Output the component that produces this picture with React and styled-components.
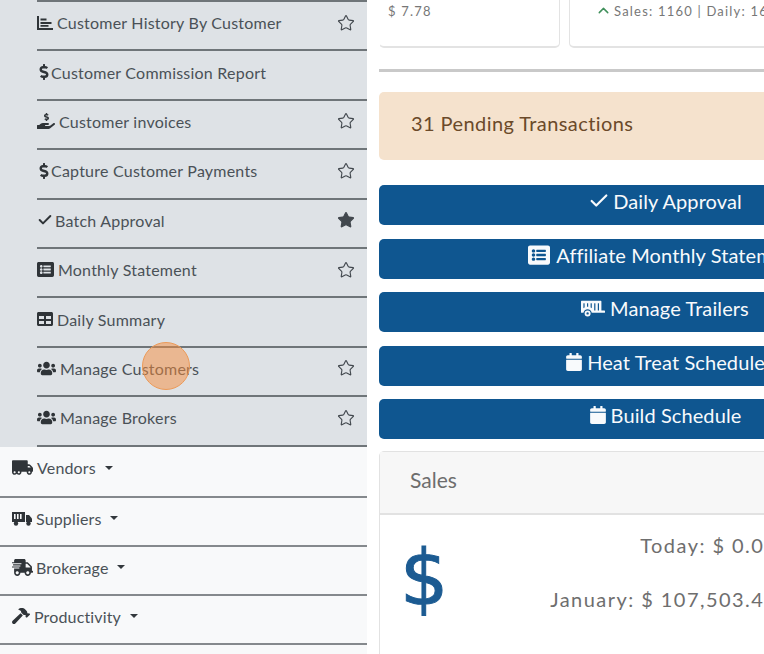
import React from "react";
import styled, { createGlobalStyle } from "styled-components";
import {
  FaDollarSign, FaHandHoldingUsd, FaListAlt, FaTable, FaUsers,
  FaTruckMoving, FaTrailer, FaShippingFast, FaHammer, FaCalendar,
} from "react-icons/fa";
import { Check, ChevronUp, Star } from "lucide-react";

const Global = createGlobalStyle`
  html, body { margin: 0; padding: 0; background: #fff; }
  body { font-family: "Lato", "Open Sans", sans-serif; }
`;

const Page = styled.div`
  position: relative;
  display: flex;
  width: 764px;
  height: 654px;
  overflow: hidden;
`;

const Sidebar = styled.aside`
  flex: 0 0 367px;
  background: #f8f9fa;
`;

const SubMenu = styled.ul`
  list-style: none;
  margin: 0;
  padding: 0 0 0 37px;
  background: #dee2e6;
`;

const SubRow = styled.li`
  display: flex;
  align-items: center;
  box-sizing: content-box;
  height: 41.4px;
  padding-bottom: 6px;
  border-top: 2px solid #6f7579;
  color: #4a5157;
  font-size: 16px;
  letter-spacing: 0.22px;
  &:last-child { border-bottom: 2px solid #6f7579; }
`;

const RowLabel = styled.span`
  display: flex;
  align-items: center;
  gap: ${(p) => p.$gap ?? 5}px;
  flex: 1;
  svg { color: #2f3438; flex: none; }
`;

const IconBox = styled.span`
  display: flex;
  justify-content: center;
  width: ${(p) => p.$w}px;
`;

const StarSlot = styled.span`
  display: flex;
  width: 18px;
  margin-right: 12px;
  color: #42484e;
`;

const TopRow = styled.div`
  display: flex;
  align-items: center;
  gap: ${(p) => p.$gap ?? 5}px;
  height: 41px;
  padding: 0 0 6px 12px;
  border-top: 2px solid #85898d;
  color: #4a5157;
  font-size: 16px;
  letter-spacing: 0.15px;
  svg { color: #2f3438; flex: none; }
  &:first-of-type { border-top: 0; height: 42px; padding-bottom: 7px; }
`;

const Caret = styled.span`
  width: 0;
  height: 0;
  margin-left: 5px;
  border-left: 4.5px solid transparent;
  border-right: 4.5px solid transparent;
  border-top: 4.5px solid #33383d;
`;

const Main = styled.main`
  flex: 0 0 572px;
  margin-left: 12px;
`;

const CardRow = styled.div`
  display: flex;
  gap: 9px;
  margin-top: -20px;
`;

const StatCard = styled.div`
  flex: ${(p) => (p.$first ? "0 0 181px" : "1")};
  height: 68px;
  box-sizing: border-box;
  padding: ${(p) => (p.$first ? "22px 0 0 8px" : "22px 0 0 25px")};
  border: 1px solid #e3e3e3;
  border-left-color: ${(p) => (p.$first ? "transparent" : "#e3e3e3")};
  border-bottom-width: 2px;
  border-radius: 5px;
  color: #777;
  font-size: 13px;
  letter-spacing: 1.2px;
  display: flex;
  gap: 2px;
  white-space: nowrap;
  svg { color: #3f8f5a; margin-top: -1px; }
`;

const Divider = styled.hr`
  margin: 21px 0 0;
  border: 0;
  height: 3px;
  background: #c9c9c9;
`;

const Alert = styled.div`
  margin-top: 20px;
  height: 68px;
  box-sizing: border-box;
  display: flex;
  align-items: center;
  padding: 0 0 6px 32px;
  background: #f5e2cd;
  border-radius: 5px;
  color: #6b4a2a;
  font-size: 20px;
  letter-spacing: 0.42px;
`;

const ActionList = styled.div`
  display: flex;
  flex-direction: column;
  gap: 13.5px;
  margin-top: 25px;
`;

const ActionButton = styled.button`
  display: flex;
  align-items: center;
  justify-content: center;
  gap: ${(p) => p.$gap ?? 6}px;
  height: 40px;
  padding: 0 0 8px;
  border: 0;
  border-radius: 5px;
  background: #0f5690;
  color: #f8fafc;
  font-family: inherit;
  font-size: 20px;
  letter-spacing: 0.1px;
`;

const SalesCard = styled.section`
  margin-top: 12px;
  border: 1px solid #e2e2e2;
  border-radius: 5px;
  height: 300px;
  box-sizing: border-box;
`;

const SalesHeader = styled.header`
  height: 55px;
  display: flex;
  align-items: center;
  padding: 0 0 6px 30px;
  background: #f7f7f7;
  border-bottom: 2px solid #e2e2e2;
  color: #6d6d6d;
  font-size: 21px;
`;

const SalesBody = styled.div`
  display: flex;
  padding-left: 20px;
`;

const Dollar = styled.span`
  margin-top: 15px;
  color: #1c5b92;
  font-family: "DejaVu Sans", sans-serif;
  font-size: 76px;
  line-height: 96px;
  -webkit-text-stroke: 1px #1c5b92;
`;

const SalesStats = styled.div`
  flex: none;
  width: 329px;
  margin-top: 3px;
  text-align: right;
  color: #6e6e6e;
  font-size: 20px;
  letter-spacing: 1.45px;
  line-height: 54px;
  white-space: nowrap;
`;

const Tap = styled.div`
  position: absolute;
  left: 142px;
  top: 342px;
  width: 46px;
  height: 46px;
  border: 1px solid #ec9a58;
  border-radius: 50%;
  background: rgba(245, 140, 60, 0.5);
`;

const HistoryIcon = () => (
  <svg width="16" height="14" viewBox="0 0 16 14" fill="currentColor">
    <path d="M0 0h2v12h14v2H0z" />
    <path d="M3.5 2.5h6v2h-6zM3.5 6h11v2h-11zM3.5 9h8v1.8h-8z" />
  </svg>
);

const SupplierIcon = () => (
  <svg width="21" height="15" viewBox="0 0 21 15" fill="currentColor">
    <path fillRule="evenodd" d="M0 1h13v10H0zM2 3v5h1.6V3zm3 0v5h1.6V3zm3 0v5h1.6V3z" />
    <path d="M14 4h3l3 3.5V11h-6z" />
    <circle cx="4" cy="12.5" r="2.2" />
    <circle cx="16.5" cy="12.5" r="2.2" />
  </svg>
);

const subItems = [
  { icon: <HistoryIcon />, text: "Customer History By Customer", star: "o", gap: 4 },
  { icon: <IconBox $w={13}><FaDollarSign size={16} /></IconBox>, text: "Customer Commission Report", gap: 1 },
  { icon: <FaHandHoldingUsd size={18} />, text: "Customer invoices", star: "o", gap: 4 },
  { icon: <IconBox $w={13}><FaDollarSign size={16} /></IconBox>, text: "Capture Customer Payments", star: "o", gap: 1 },
  { icon: <Check size={16} strokeWidth={3} />, text: "Batch Approval", star: "s", gap: 2 },
  { icon: <FaListAlt size={17} />, text: "Monthly Statement", star: "o", gap: 4 },
  { icon: <FaTable size={16} />, text: "Daily Summary", gap: 4 },
  { icon: <FaUsers size={19} />, text: "Manage Customers", star: "o", gap: 4 },
  { icon: <FaUsers size={19} />, text: "Manage Brokers", star: "o", gap: 4 },
];

const topItems = [
  { icon: <FaTruckMoving size={21} />, text: "Vendors", gap: 4 },
  { icon: <SupplierIcon />, text: "Suppliers", gap: 3 },
  { icon: <FaShippingFast size={21} />, text: "Brokerage", gap: 3 },
  { icon: <FaHammer size={18} />, text: "Productivity", gap: 4 },
];

const actions = [
  { icon: <Check size={22} strokeWidth={2.4} />, text: "Daily Approval", gap: 3 },
  { icon: <FaListAlt size={22} />, text: "Affiliate Monthly Statement", gap: 6 },
  { icon: <FaTrailer size={24} />, text: "Manage Trailers", gap: 5 },
  { icon: <FaCalendar size={18} />, text: "Heat Treat Schedule", gap: 4 },
  { icon: <FaCalendar size={18} />, text: "Build Schedule", gap: 4 },
];

export default function App() {
  return (
    <Page>
      <Global />
      <Sidebar>
        <SubMenu>
          {subItems.map((it) => (
            <SubRow key={it.text}>
              <RowLabel $gap={it.gap}>{it.icon}{it.text}</RowLabel>
              <StarSlot>
                {it.star === "o" && <Star size={18} strokeWidth={1.5} />}
                {it.star === "s" && <Star size={18} strokeWidth={1.5} fill="currentColor" />}
              </StarSlot>
            </SubRow>
          ))}
        </SubMenu>
        {topItems.map((it) => (
          <TopRow key={it.text} $gap={it.gap}>{it.icon}{it.text}<Caret /></TopRow>
        ))}
        <TopRow />
      </Sidebar>
      <Main>
        <CardRow>
          <StatCard $first>$ 7.78</StatCard>
          <StatCard><ChevronUp size={17} />Sales: 1160 | Daily: 16</StatCard>
        </CardRow>
        <Divider />
        <Alert>31 Pending Transactions</Alert>
        <ActionList>
          {actions.map((a) => (
            <ActionButton key={a.text} $gap={a.gap}>{a.icon}{a.text}</ActionButton>
          ))}
        </ActionList>
        <SalesCard>
          <SalesHeader>Sales</SalesHeader>
          <SalesBody>
            <Dollar>$</Dollar>
            <SalesStats>
              <div>Today: $ 0.00</div>
              <div>January: $ 107,503.45</div>
            </SalesStats>
          </SalesBody>
        </SalesCard>
      </Main>
      <Tap />
    </Page>
  );
}
